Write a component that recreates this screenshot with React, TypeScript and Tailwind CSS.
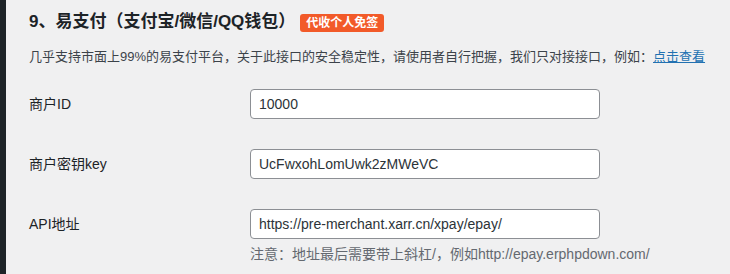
const font = {
  fontFamily: '"Liberation Sans", "Noto Sans CJK SC", sans-serif',
};

const Field = ({ label, value }: { label: string; value: string }) => {
  return (
    <div className="flex items-center">
      <div className="w-[221px] text-[14px] text-[#1d2327]">{label}</div>
      <div className="w-[350px] h-[30px] flex items-center px-[8px] bg-white border border-[#8c8f94] rounded-[4px] text-[14px] text-[#2c3338]">
        {value}
      </div>
    </div>
  );
};

export default function App() {
  return (
    <div className="flex w-[730px] h-[274px] bg-[#f0f0f1] overflow-hidden" style={font}>
      <div className="w-[6px] bg-[#1d2327] shrink-0"></div>
      <div className="pl-[23px] pt-[10px] flex flex-col">
        <div className="flex items-center gap-[5px] h-[24px]">
          <h2 className="text-[17px] font-semibold text-[#1d2327] leading-[24px]">
            9、易支付（支付宝/微信/QQ钱包）
          </h2>
          <span className="mt-[2px] h-[18px] px-[6px] flex items-center rounded-[3px] bg-[#f25a29] text-white text-[12px] font-semibold">
            代收个人免签
          </span>
        </div>
        <p className="mt-[13px] text-[13px] leading-[20px] text-[#3c434a] whitespace-nowrap">
          几乎支持市面上99%的易支付平台，关于此接口的安全稳定性，请使用者自行把握，我们只对接接口，例如：
          <a className="text-[#2271b1] underline">点击查看</a>
        </p>
        <div className="mt-[22px] flex flex-col gap-[30px]">
          <Field label="商户ID" value="10000" />
          <Field label="商户密钥key" value="UcFwxohLomUwk2zMWeVC" />
          <Field label="API地址" value="https://pre-merchant.xarr.cn/xpay/epay/" />
        </div>
        <p className="ml-[221px] mt-[6px] text-[14px] leading-[18px] text-[#646970] whitespace-nowrap">
          注意：地址最后需要带上斜杠/，例如http://epay.erphpdown.com/
        </p>
      </div>
    </div>
  );
}
